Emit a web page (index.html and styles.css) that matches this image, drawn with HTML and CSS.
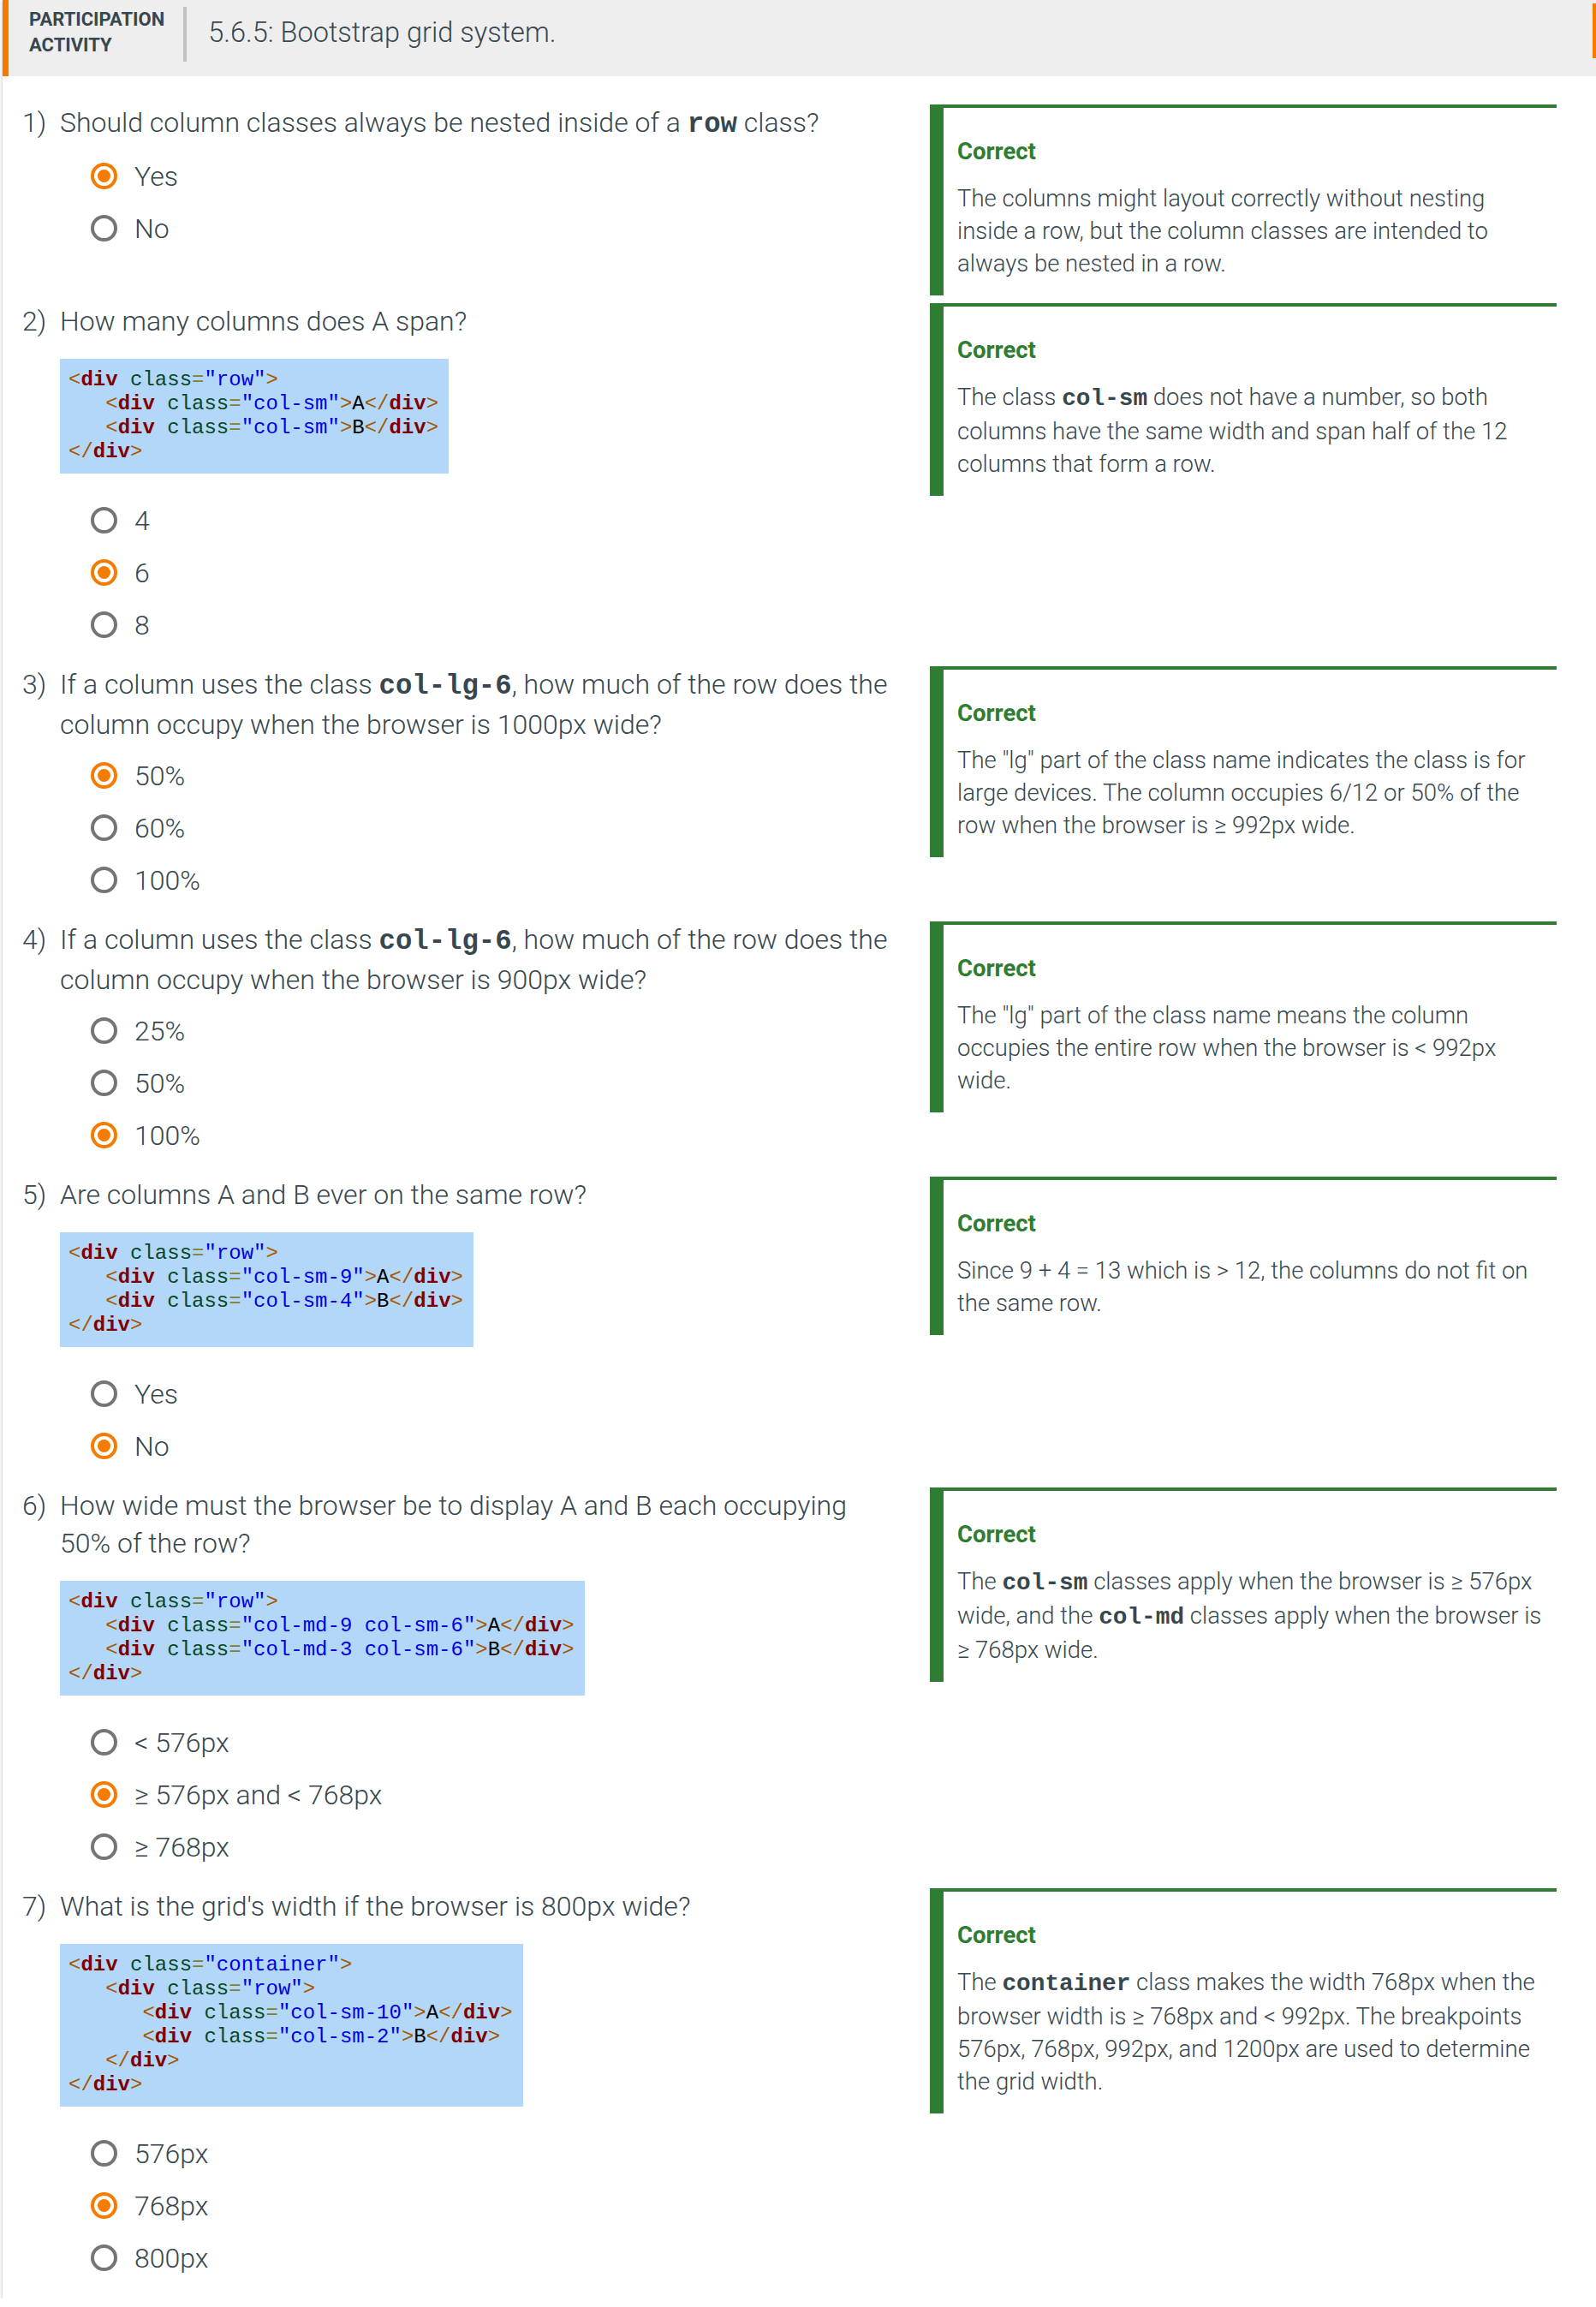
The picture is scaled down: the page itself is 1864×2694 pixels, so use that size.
FILE: index.html
```html
<!DOCTYPE html>
<html lang="en">
<head>
<meta charset="utf-8">
<title>5.6.5: Bootstrap grid system.</title>
<link rel="stylesheet" href="styles.css">
</head>
<body>
<div class="card">
  <header class="act-header">
    <div class="act-label">PARTICIPATION<br>ACTIVITY</div>
    <div class="act-sep"></div>
    <h1 class="act-title">5.6.5: Bootstrap grid system.</h1>
    <span class="edge-mark"></span>
  </header>

  <div class="questions">

    <div class="q-row">
      <div class="q-main">
        <div class="q-text"><span class="q-num">1)</span><span class="q-body">Should column classes always be nested inside of a <code>row</code> class?</span></div>
        <div class="options">
          <div class="opt"><span class="radio checked"></span><span class="opt-label">Yes</span></div>
          <div class="opt"><span class="radio"></span><span class="opt-label">No</span></div>
        </div>
      </div>
      <div class="feedback">
        <div class="fb-title">Correct</div>
        <p class="fb-text">The columns might layout correctly without nesting inside a row, but the column classes are intended to always be nested in a row.</p>
      </div>
    </div>

    <div class="q-row">
      <div class="q-main">
        <div class="q-text"><span class="q-num">2)</span><span class="q-body">How many columns does A span?</span></div>
<pre class="code"><span class="br">&lt;</span><span class="tag">div</span> <span class="attr">class</span><span class="eq">=</span><span class="str">"row"</span><span class="br">&gt;</span>
   <span class="br">&lt;</span><span class="tag">div</span> <span class="attr">class</span><span class="eq">=</span><span class="str">"col-sm"</span><span class="br">&gt;</span>A<span class="br">&lt;/</span><span class="tag">div</span><span class="br">&gt;</span>
   <span class="br">&lt;</span><span class="tag">div</span> <span class="attr">class</span><span class="eq">=</span><span class="str">"col-sm"</span><span class="br">&gt;</span>B<span class="br">&lt;/</span><span class="tag">div</span><span class="br">&gt;</span>
<span class="br">&lt;/</span><span class="tag">div</span><span class="br">&gt;</span></pre>
        <div class="options">
          <div class="opt"><span class="radio"></span><span class="opt-label">4</span></div>
          <div class="opt"><span class="radio checked"></span><span class="opt-label">6</span></div>
          <div class="opt"><span class="radio"></span><span class="opt-label">8</span></div>
        </div>
      </div>
      <div class="feedback">
        <div class="fb-title">Correct</div>
        <p class="fb-text">The class <code>col-sm</code> does not have a number, so both columns have the same width and span half of the 12 columns that form a row.</p>
      </div>
    </div>

    <div class="q-row">
      <div class="q-main">
        <div class="q-text"><span class="q-num">3)</span><span class="q-body">If a column uses the class <code>col-lg-6</code>, how much of the row does the column occupy when the browser is 1000px wide?</span></div>
        <div class="options">
          <div class="opt"><span class="radio checked"></span><span class="opt-label">50%</span></div>
          <div class="opt"><span class="radio"></span><span class="opt-label">60%</span></div>
          <div class="opt"><span class="radio"></span><span class="opt-label">100%</span></div>
        </div>
      </div>
      <div class="feedback">
        <div class="fb-title">Correct</div>
        <p class="fb-text">The "lg" part of the class name indicates the class is for large devices. The column occupies 6/12 or 50% of the row when the browser is ≥ 992px wide.</p>
      </div>
    </div>

    <div class="q-row">
      <div class="q-main">
        <div class="q-text"><span class="q-num">4)</span><span class="q-body">If a column uses the class <code>col-lg-6</code>, how much of the row does the column occupy when the browser is 900px wide?</span></div>
        <div class="options">
          <div class="opt"><span class="radio"></span><span class="opt-label">25%</span></div>
          <div class="opt"><span class="radio"></span><span class="opt-label">50%</span></div>
          <div class="opt"><span class="radio checked"></span><span class="opt-label">100%</span></div>
        </div>
      </div>
      <div class="feedback">
        <div class="fb-title">Correct</div>
        <p class="fb-text">The "lg" part of the class name means the column occupies the entire row when the browser is &lt; 992px wide.</p>
      </div>
    </div>

    <div class="q-row">
      <div class="q-main">
        <div class="q-text"><span class="q-num">5)</span><span class="q-body">Are columns A and B ever on the same row?</span></div>
<pre class="code"><span class="br">&lt;</span><span class="tag">div</span> <span class="attr">class</span><span class="eq">=</span><span class="str">"row"</span><span class="br">&gt;</span>
   <span class="br">&lt;</span><span class="tag">div</span> <span class="attr">class</span><span class="eq">=</span><span class="str">"col-sm-9"</span><span class="br">&gt;</span>A<span class="br">&lt;/</span><span class="tag">div</span><span class="br">&gt;</span>
   <span class="br">&lt;</span><span class="tag">div</span> <span class="attr">class</span><span class="eq">=</span><span class="str">"col-sm-4"</span><span class="br">&gt;</span>B<span class="br">&lt;/</span><span class="tag">div</span><span class="br">&gt;</span>
<span class="br">&lt;/</span><span class="tag">div</span><span class="br">&gt;</span></pre>
        <div class="options">
          <div class="opt"><span class="radio"></span><span class="opt-label">Yes</span></div>
          <div class="opt"><span class="radio checked"></span><span class="opt-label">No</span></div>
        </div>
      </div>
      <div class="feedback">
        <div class="fb-title">Correct</div>
        <p class="fb-text">Since 9 + 4 = 13 which is &gt; 12, the columns do not fit on the same row.</p>
      </div>
    </div>

    <div class="q-row">
      <div class="q-main">
        <div class="q-text"><span class="q-num">6)</span><span class="q-body">How wide must the browser be to display A and B each occupying 50% of the row?</span></div>
<pre class="code"><span class="br">&lt;</span><span class="tag">div</span> <span class="attr">class</span><span class="eq">=</span><span class="str">"row"</span><span class="br">&gt;</span>
   <span class="br">&lt;</span><span class="tag">div</span> <span class="attr">class</span><span class="eq">=</span><span class="str">"col-md-9 col-sm-6"</span><span class="br">&gt;</span>A<span class="br">&lt;/</span><span class="tag">div</span><span class="br">&gt;</span>
   <span class="br">&lt;</span><span class="tag">div</span> <span class="attr">class</span><span class="eq">=</span><span class="str">"col-md-3 col-sm-6"</span><span class="br">&gt;</span>B<span class="br">&lt;/</span><span class="tag">div</span><span class="br">&gt;</span>
<span class="br">&lt;/</span><span class="tag">div</span><span class="br">&gt;</span></pre>
        <div class="options">
          <div class="opt"><span class="radio"></span><span class="opt-label">&lt; 576px</span></div>
          <div class="opt"><span class="radio checked"></span><span class="opt-label">≥ 576px and &lt; 768px</span></div>
          <div class="opt"><span class="radio"></span><span class="opt-label">≥ 768px</span></div>
        </div>
      </div>
      <div class="feedback">
        <div class="fb-title">Correct</div>
        <p class="fb-text">The <code>col-sm</code> classes apply when the browser is ≥ 576px wide, and the <code>col-md</code> classes apply when the browser is ≥ 768px wide.</p>
      </div>
    </div>

    <div class="q-row">
      <div class="q-main">
        <div class="q-text"><span class="q-num">7)</span><span class="q-body">What is the grid's width if the browser is 800px wide?</span></div>
<pre class="code"><span class="br">&lt;</span><span class="tag">div</span> <span class="attr">class</span><span class="eq">=</span><span class="str">"container"</span><span class="br">&gt;</span>
   <span class="br">&lt;</span><span class="tag">div</span> <span class="attr">class</span><span class="eq">=</span><span class="str">"row"</span><span class="br">&gt;</span>
      <span class="br">&lt;</span><span class="tag">div</span> <span class="attr">class</span><span class="eq">=</span><span class="str">"col-sm-10"</span><span class="br">&gt;</span>A<span class="br">&lt;/</span><span class="tag">div</span><span class="br">&gt;</span>
      <span class="br">&lt;</span><span class="tag">div</span> <span class="attr">class</span><span class="eq">=</span><span class="str">"col-sm-2"</span><span class="br">&gt;</span>B<span class="br">&lt;/</span><span class="tag">div</span><span class="br">&gt;</span>
   <span class="br">&lt;/</span><span class="tag">div</span><span class="br">&gt;</span>
<span class="br">&lt;/</span><span class="tag">div</span><span class="br">&gt;</span></pre>
        <div class="options">
          <div class="opt"><span class="radio"></span><span class="opt-label">576px</span></div>
          <div class="opt"><span class="radio checked"></span><span class="opt-label">768px</span></div>
          <div class="opt"><span class="radio"></span><span class="opt-label">800px</span></div>
        </div>
      </div>
      <div class="feedback">
        <div class="fb-title">Correct</div>
        <p class="fb-text">The <code>container</code> class makes the width 768px when the browser width is ≥ 768px and &lt; 992px. The breakpoints 576px, 768px, 992px, and 1200px are used to determine the grid width.</p>
      </div>
    </div>

  </div>
</div>
</body>
</html>
```

FILE: styles.css
```css
* {
  box-sizing: border-box;
}

html, body {
  margin: 0;
  padding: 0;
  background: #ffffff;
}

body {
  font-family: Roboto, "Liberation Sans", sans-serif;
  font-weight: 300;
  color: #37474f;
}

.card {
  margin-left: 3px;
  background: #ffffff;
  box-shadow: 0 1px 4px rgba(0, 0, 0, 0.28);
}

/* ---------- header ---------- */
.act-header {
  position: relative;
  display: flex;
  align-items: flex-start;
  height: 89px;
  padding: 8px 0 0 24px;
  background: #eeeeee;
  border-left: 7px solid #f57c00;
}

.act-label {
  font-size: 22px;
  line-height: 30px;
  font-weight: 700;
  color: #37474f;
}

.act-sep {
  width: 4px;
  height: 64px;
  margin: 0 25px 0 22px;
  background: #c2c2c2;
}

.act-title {
  margin: 11px 0 0;
  font-size: 32.5px;
  line-height: 38px;
  font-weight: 300;
  color: #37474f;
}

.edge-mark {
  position: absolute;
  top: 4px;
  right: 0;
  width: 4px;
  height: 64px;
  background: #f57c00;
}

/* ---------- questions ---------- */
.questions {
  padding: 32px 0 0 23px;
}

.q-row {
  display: flex;
  align-items: flex-start;
}

.q-main {
  flex: 0 0 1029px;
  padding-bottom: 17px;
}

.q-text {
  display: flex;
  font-size: 32px;
  line-height: 44px;
}

.q-num {
  flex: 0 0 44px;
}

.q-body {
  flex: 1;
}

code {
  font-family: "Liberation Mono", "Courier New", monospace;
  font-weight: 700;
  font-size: 1.01em;
  color: #37474f;
}

.code {
  width: fit-content;
  margin: 22px 0 24px 44px;
  padding: 11px 12px 11px 10px;
  background: #b3d7f9;
  font-family: "Liberation Mono", "Courier New", monospace;
  font-size: 24px;
  line-height: 28px;
  font-weight: 400;
  color: #000000;
}

.code .br { color: #a65700; }
.code .tag { color: #800000; font-weight: 700; }
.code .attr { color: #074726; }
.code .eq { color: #808030; }
.code .str { color: #0000e6; }

.q-text + .options {
  margin-top: 7px;
}

.options {
  padding-left: 80px;
}

.opt {
  display: flex;
  align-items: center;
  height: 61px;
  gap: 20px;
}

.radio {
  flex: 0 0 31px;
  width: 31px;
  height: 31px;
  border: 4px solid #757575;
  border-radius: 50%;
  display: flex;
  align-items: center;
  justify-content: center;
}

.radio.checked {
  border-color: #f57c00;
}

.radio.checked::after {
  content: "";
  width: 15px;
  height: 15px;
  border-radius: 50%;
  background: #f57c00;
}

.opt-label {
  font-size: 32px;
  line-height: 44px;
}

/* ---------- feedback ---------- */
.feedback {
  flex: 0 0 732px;
  margin: 1px 0 8px 31px;
  padding: 32px 8px 18px 16px;
  border-top: 4px solid #2e7d32;
  border-left: 16px solid #2e7d32;
}

.fb-title {
  font-size: 27.5px;
  line-height: 38px;
  font-weight: 700;
  color: #2e7d32;
}

.fb-text {
  margin: 17px 0 0;
  font-size: 27.5px;
  line-height: 38px;
}
```
